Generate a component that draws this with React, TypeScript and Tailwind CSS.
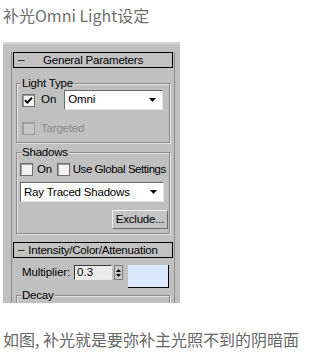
import React from "react";

const ui = { fontFamily: "'Liberation Sans', 'DejaVu Sans', sans-serif" };
const cjk = { fontFamily: "'Noto Sans CJK SC', 'Noto Sans', sans-serif" };

function Check({ checked, disabled }: { checked?: boolean; disabled?: boolean }) {
  return (
    <div
      className={`w-[13px] h-[13px] shrink-0 flex items-center justify-center border ${
        disabled ? "border-[#9c9c9c] bg-[#c6c6c6]" : "border-[#6e6e6e] bg-[#f2f2f2]"
      } shadow-[inset_1px_1px_0_#a0a0a0]`}
    >
      {checked && (
        <svg width="9" height="9" viewBox="0 0 9 9">
          <path d="M1 4.2 L3.4 6.6 L8 1.6" stroke="#000" strokeWidth="2" fill="none" />
        </svg>
      )}
    </div>
  );
}

function Dropdown({ label, className }: { label: string; className?: string }) {
  return (
    <div
      className={`h-[20px] flex items-center justify-between bg-white border border-t-[#6a6a6a] border-l-[#6a6a6a] border-r-[#e4e4e4] border-b-[#e4e4e4] pl-[3px] pr-[6px] text-[11.5px] tracking-[-0.2px] text-black ${className ?? ""}`}
    >
      <span className="whitespace-nowrap">{label}</span>
      <svg width="7" height="4" viewBox="0 0 7 4">
        <path d="M0 0 H7 L3.5 4 Z" fill="#000" />
      </svg>
    </div>
  );
}

function Group({ title, children, className }: { title: string; children?: React.ReactNode; className?: string }) {
  return (
    <div className={`relative border border-[#8c8c8c] shadow-[1px_1px_0_#e4e4e4,inset_1px_1px_0_#e4e4e4] ${className ?? ""}`}>
      <span className="absolute -top-[8px] left-[4px] bg-[#c0c0c0] px-[1px] text-[11.5px] tracking-[-0.2px] leading-[14px] text-black whitespace-nowrap">
        {title}
      </span>
      {children}
    </div>
  );
}

function Header({ title, center }: { title: string; center?: boolean }) {
  return (
    <div className="h-[16px] border border-black bg-[#c2c2c2] flex items-center text-[11.5px] tracking-[-0.2px] text-black relative whitespace-nowrap">
      <span className="pl-[4px] leading-none">–</span>
      {center ? (
        <span className="absolute left-0 right-0 text-center leading-[14px]">{title}</span>
      ) : (
        <span className="pl-[4px] leading-[14px]">{title}</span>
      )}
    </div>
  );
}

export default function App() {
  return (
    <div className="w-[317px] h-[357px] bg-white overflow-hidden">
      <div className="pl-[3px] pt-[4px] h-[42px] text-[16px] leading-[22px] text-[#6e6e6e]" style={cjk}>
        补光Omni Light设定
      </div>
      <div
        className="ml-[3px] w-[177px] h-[261px] bg-[#c0c0c0] border-t-[2px] border-[#d6d6d6] pt-[8px] overflow-hidden"
        style={ui}
      >
        <div className="ml-[8px] w-[164px] border-l border-r border-[#8c8c8c] h-[190px] flex flex-col">
          <div className="mx-[1px]">
            <Header title="General Parameters" center />
          </div>
          <div className="mx-[4px] mt-[15px] flex flex-col">
            <Group title="Light Type" className="h-[60px] pl-[5px] pt-[6px]">
              <div className="flex items-center h-[20px]">
                <Check checked />
                <span className="ml-[6px] text-[11.5px]">On</span>
                <Dropdown label="Omni" className="ml-[8px] w-[99px]" />
              </div>
              <div className="flex items-center mt-[10px] text-[11.5px] text-[#8a8a8a] tracking-[-0.2px]">
                <Check disabled />
                <span className="ml-[6px]">Targeted</span>
              </div>
            </Group>
            <Group title="Shadows" className="mt-[9px] h-[82px] pl-[3px] pr-[6px] pt-[8px]">
              <div className="flex items-center text-[11.5px] tracking-[-0.3px] whitespace-nowrap">
                <Check />
                <span className="ml-[4px]">On</span>
                <div className="ml-[5px]">
                  <Check />
                </div>
                <span className="ml-[3px] tracking-[-0.45px]">Use Global Settings</span>
              </div>
              <Dropdown label="Ray Traced Shadows" className="mt-[4px] w-[144px]" />
              <div className="flex justify-end mt-[8px] -mr-[5px]">
                <div className="w-[56px] h-[19px] border border-t-[#f0f0f0] border-l-[#f0f0f0] border-r-[#6a6a6a] border-b-[#6a6a6a] bg-[#c4c4c4] flex items-center justify-center text-[11.5px] tracking-[-0.2px]">
                  Exclude...
                </div>
              </div>
            </Group>
          </div>
        </div>
        <div className="ml-[8px] w-[164px] border-l border-r border-[#8c8c8c] h-[70px] flex flex-col">
          <div className="mx-[1px]">
            <Header title="Intensity/Color/Attenuation" />
          </div>
          <div className="mt-[7px] flex items-start">
            <span className="ml-[10px] text-[11.5px] tracking-[-0.1px] leading-[15px]">Multiplier:</span>
            <div className="ml-[4px] w-[38px] h-[15px] bg-[#ececec] border border-t-[#3a3a3a] border-l-[#3a3a3a] border-r-[#e8e8e8] border-b-[#e8e8e8] text-[11.5px] pl-[2px] leading-[13px]">
              0.3
            </div>
            <div className="ml-[2px] w-[9px] h-[15px] flex flex-col items-center justify-center gap-[2px] bg-[#c8c8c8] border border-[#7a7a7a]">
              <svg width="5" height="3" viewBox="0 0 5 3"><path d="M0 3 H5 L2.5 0 Z" fill="#000" /></svg>
              <svg width="5" height="3" viewBox="0 0 5 3"><path d="M0 0 H5 L2.5 3 Z" fill="#000" /></svg>
            </div>
            <div className="ml-[5px] w-[41px] h-[23px] bg-[#dbe9ff] border-r border-b border-black" />
          </div>
          <div className="mx-[4px] mt-[7px]">
            <Group title="Decay" className="h-[40px]" />
          </div>
        </div>
      </div>
      <div className="pl-[3px] mt-[25px] text-[16px] leading-[22px] text-[#666]" style={cjk}>
        如图, 补光就是要弥补主光照不到的阴暗面
      </div>
    </div>
  );
}
